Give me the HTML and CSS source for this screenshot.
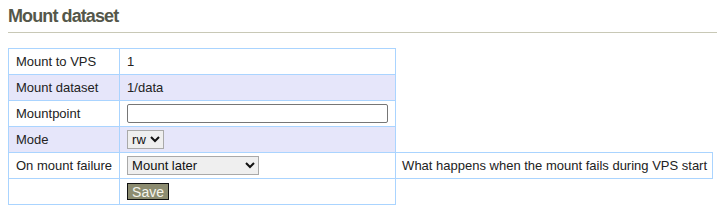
FILE: index.html
```html
<!doctype html>
<html lang="en">
<head>
	<meta charset="UTF-8">
	<title>Mount dataset</title>
	<link rel="stylesheet" href="styles.css">
</head>
<body>
	<h2 class="title">Mount dataset</h2>
	<form class="mount-form">
		<table class="form-table">
			<tr>
				<td class="label">Mount to VPS</td>
				<td>1</td>
			</tr>
			<tr class="alt">
				<td class="label">Mount dataset</td>
				<td>1/data</td>
			</tr>
			<tr>
				<td class="label">Mountpoint</td>
				<td><input type="text" class="text-input" name="mountpoint"></td>
			</tr>
			<tr class="alt">
				<td class="label">Mode</td>
				<td>
					<select class="sel sel-mode" name="mode">
						<option>rw</option>
						<option>ro</option>
					</select>
				</td>
			</tr>
			<tr>
				<td class="label">On mount failure</td>
				<td>
					<select class="sel sel-fail" name="on_start_fail">
						<option>Mount later</option>
						<option>Skip</option>
						<option>Fail VPS start</option>
					</select>
				</td>
				<td class="note">What happens when the mount fails during VPS start</td>
			</tr>
			<tr>
				<td class="label"></td>
				<td><button type="button" class="btn-save">Save</button></td>
			</tr>
		</table>
	</form>
</body>
</html>
```

FILE: styles.css
```css
body{
	margin:0 0 0 8px;
	font:13px/15px "Liberation Sans", Arial, sans-serif;
	color:#222;
	background:#fff;
}
.title{
	margin:0;
	padding:6px 0 6px;
	font:700 18px/20px "Liberation Sans", Arial, sans-serif;
	letter-spacing:-0.9px;
	color:#55574a;
	border-bottom:1px solid #c8c8b6;
}
.mount-form{
	margin-top:15px;
}
.form-table{
	border-collapse:collapse;
}
.form-table tr{
	height:26px;
}
.form-table td{
	border:1px solid #aad4ff;
	padding:0 7px;
	vertical-align:middle;
	white-space:nowrap;
}
.form-table td.label{
	width:94px;
}
.form-table tr.alt td{
	background:#e6e6fa;
}
.form-table td.note{
	padding:0 5px 0 6px;
}
.text-input{
	box-sizing:border-box;
	width:261px;
	height:19px;
	margin:0;
	padding:1px 3px;
	border:1px solid #767676;
	border-radius:2px;
	font:13px "Liberation Sans", Arial, sans-serif;
	vertical-align:middle;
}
.sel{
	box-sizing:border-box;
	height:19px;
	margin:0;
	padding:0;
	border:1px solid #a9a9a9;
	background:#efefef;
	font:13px "Liberation Sans", Arial, sans-serif;
	color:#111;
	vertical-align:middle;
}
.sel-mode{
	width:37px;
}
.sel-fail{
	width:132px;
}
.btn-save{
	box-sizing:border-box;
	height:17px;
	margin:0;
	padding:0 4px;
	border:1px solid #111;
	background:#8c8c70;
	color:#f4f4ec;
	font:14px/14px "Liberation Sans", Arial, sans-serif;
	vertical-align:middle;
}
```
